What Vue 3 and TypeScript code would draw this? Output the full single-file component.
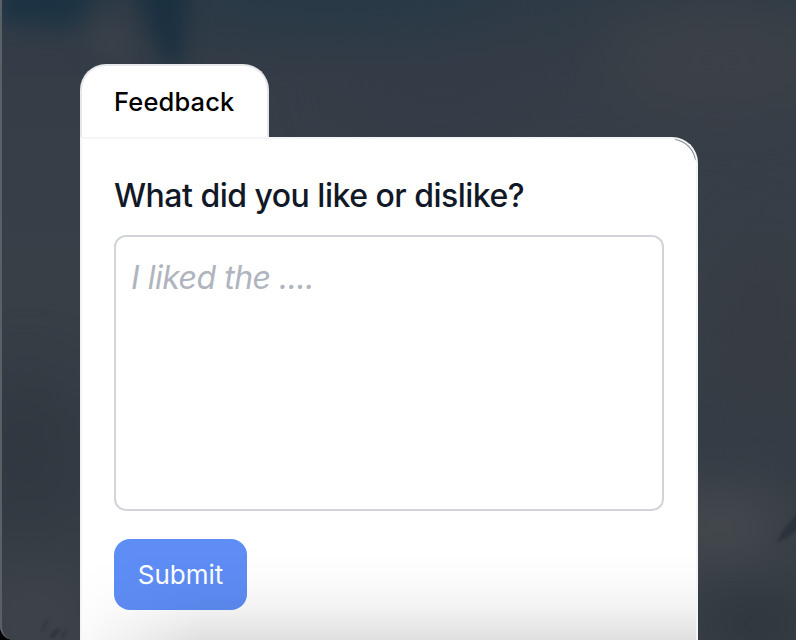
<script setup lang="ts">
import { ref } from 'vue'

const feedback = ref<string>('')

function submit(): void {
  feedback.value = ''
}
</script>

<template>
  <main class="screen">
    <svg class="backdrop" viewBox="0 0 796 640" aria-hidden="true">
      <defs>
        <linearGradient id="sky" x1="0" y1="0" x2="0" y2="1">
          <stop offset="0" stop-color="#2f3b46" />
          <stop offset="0.15" stop-color="#363d47" />
          <stop offset="0.45" stop-color="#383f47" />
          <stop offset="0.75" stop-color="#353c45" />
          <stop offset="1" stop-color="#3a4046" />
        </linearGradient>
        <filter id="soft" x="-50%" y="-50%" width="200%" height="200%" color-interpolation-filters="sRGB">
          <feGaussianBlur stdDeviation="10" />
        </filter>
        <filter id="wide" x="-80%" y="-80%" width="260%" height="260%" color-interpolation-filters="sRGB">
          <feGaussianBlur stdDeviation="30" />
        </filter>
        <filter id="fine" x="-50%" y="-50%" width="200%" height="200%" color-interpolation-filters="sRGB">
          <feGaussianBlur stdDeviation="1.4" />
        </filter>
      </defs>
      <rect width="796" height="640" fill="url(#sky)" />
      <g filter="url(#wide)">
        <ellipse cx="340" cy="-5" rx="170" ry="28" fill="#263947" />
        <ellipse cx="720" cy="60" rx="120" ry="55" fill="#3c4147" />
        <ellipse cx="440" cy="90" rx="100" ry="30" fill="#333b47" />
        <ellipse cx="25" cy="450" rx="50" ry="75" fill="#303840" />
        <ellipse cx="760" cy="330" rx="55" ry="100" fill="#373c44" />
        <ellipse cx="720" cy="525" rx="65" ry="30" fill="#4a4d51" />
        <ellipse cx="755" cy="625" rx="60" ry="25" fill="#29323a" />
        <ellipse cx="35" cy="610" rx="40" ry="30" fill="#41464b" />
      </g>
      <g filter="url(#soft)">
        <path d="M0-20H110L70 28L0 20Z" fill="#1c3343" />
        <path d="M132-20H190L180 66H166Z" fill="#1b3040" />
        <path d="M84 50L115 12L139 62Z" fill="#3b414b" />
      </g>
      <g filter="url(#fine)">
        <path d="M776 543Q785 525 800 511V528Q788 538 776 543Z" fill="#2c323b" />
        <path d="M40 632L46 620L49 619L44 631Z" fill="#33383e" />
        <path d="M49 637L57 629L60 629L54 637Z" fill="#2c3137" />
        <path d="M60 637L66 630L67 632L63 637Z" fill="#30353b" />
      </g>
    </svg>
    <div class="frame-edge"></div>

    <section class="widget">
      <header class="tab">Feedback</header>
      <form class="card" @submit.prevent="submit">
        <label class="question" for="feedback">What did you like or dislike?</label>
        <textarea id="feedback" v-model="feedback" class="answer" placeholder="I liked the ...."></textarea>
        <button class="submit" type="submit">Submit</button>
        <div class="shade"></div>
      </form>
    </section>
  </main>
</template>

<style>
body {
  margin: 0;
  background: #000;
}
</style>

<style scoped>
.screen {
  position: relative;
  box-sizing: border-box;
  height: 640px;
  padding: 64px 98px 0 80px;
  overflow: hidden;
  background: #000;
  font-family: Inter, "Liberation Sans", sans-serif;
}

.backdrop {
  position: absolute;
  inset: 0;
  width: 100%;
  height: 100%;
  border-bottom-left-radius: 14px;
}

.frame-edge {
  position: absolute;
  inset: -4px -4px 0 0;
  border-left: 2px solid #596167;
  border-bottom-left-radius: 14px;
}

.widget {
  position: relative;
  display: flex;
  flex-direction: column;
  align-items: flex-start;
  height: 576px;
}

.tab {
  box-sizing: border-box;
  width: 189px;
  height: 73px;
  padding: 20px 0 0 32px;
  border: 2px solid #e5e7eb;
  border-bottom: 0;
  border-radius: 26px 26px 0 0;
  background: #fff;
  color: #000;
  font-size: 25.5px;
  font-weight: 500;
  line-height: 32px;
  letter-spacing: 0.15px;
}

.card {
  position: relative;
  box-sizing: border-box;
  display: flex;
  flex: 1;
  flex-direction: column;
  align-items: flex-start;
  align-self: stretch;
  padding: 37px 32px 0;
  border: 2px solid #f3f4f6;
  border-bottom: 0;
  border-top-right-radius: 26px;
  background: #fff;
}

.card::before {
  content: "";
  position: absolute;
  top: 0;
  right: 0;
  width: 23px;
  height: 23px;
  border-top: 1px solid #858b92;
  border-right: 1px solid #858b92;
  border-top-right-radius: 24px;
  clip-path: polygon(10% 0, 100% 0, 100% 90%);
}

.question {
  color: #111827;
  font-size: 32px;
  font-weight: 500;
  line-height: 40px;
  letter-spacing: -0.51px;
  white-space: nowrap;
}

.answer {
  box-sizing: border-box;
  align-self: stretch;
  height: 276px;
  margin: 19px 0 28px;
  padding: 20px 15px;
  border: 2px solid #d1d5db;
  border-radius: 12px;
  outline: none;
  background: #fff;
  color: #111827;
  font-family: inherit;
  font-size: 32px;
  line-height: 42px;
  letter-spacing: -0.48px;
  resize: none;
}

.answer::placeholder {
  color: #afb4be;
  font-style: italic;
  opacity: 1;
}

.submit {
  width: 133px;
  height: 71px;
  padding: 0;
  border: 0;
  border-radius: 16px;
  background: #5e8df5;
  color: #fff;
  font-family: inherit;
  font-size: 26px;
  font-weight: 400;
  letter-spacing: 0;
}

.shade {
  position: absolute;
  right: 0;
  bottom: 0;
  left: 0;
  height: 90px;
  background: linear-gradient(to bottom, transparent, rgb(0 0 0 / 1.2%) 30%, rgb(0 0 0 / 5%) 65%, rgb(0 0 0 / 12%));
  mask-image: linear-gradient(to right, rgb(0 0 0 / 15%), #000 120px);
  pointer-events: none;
}
</style>
